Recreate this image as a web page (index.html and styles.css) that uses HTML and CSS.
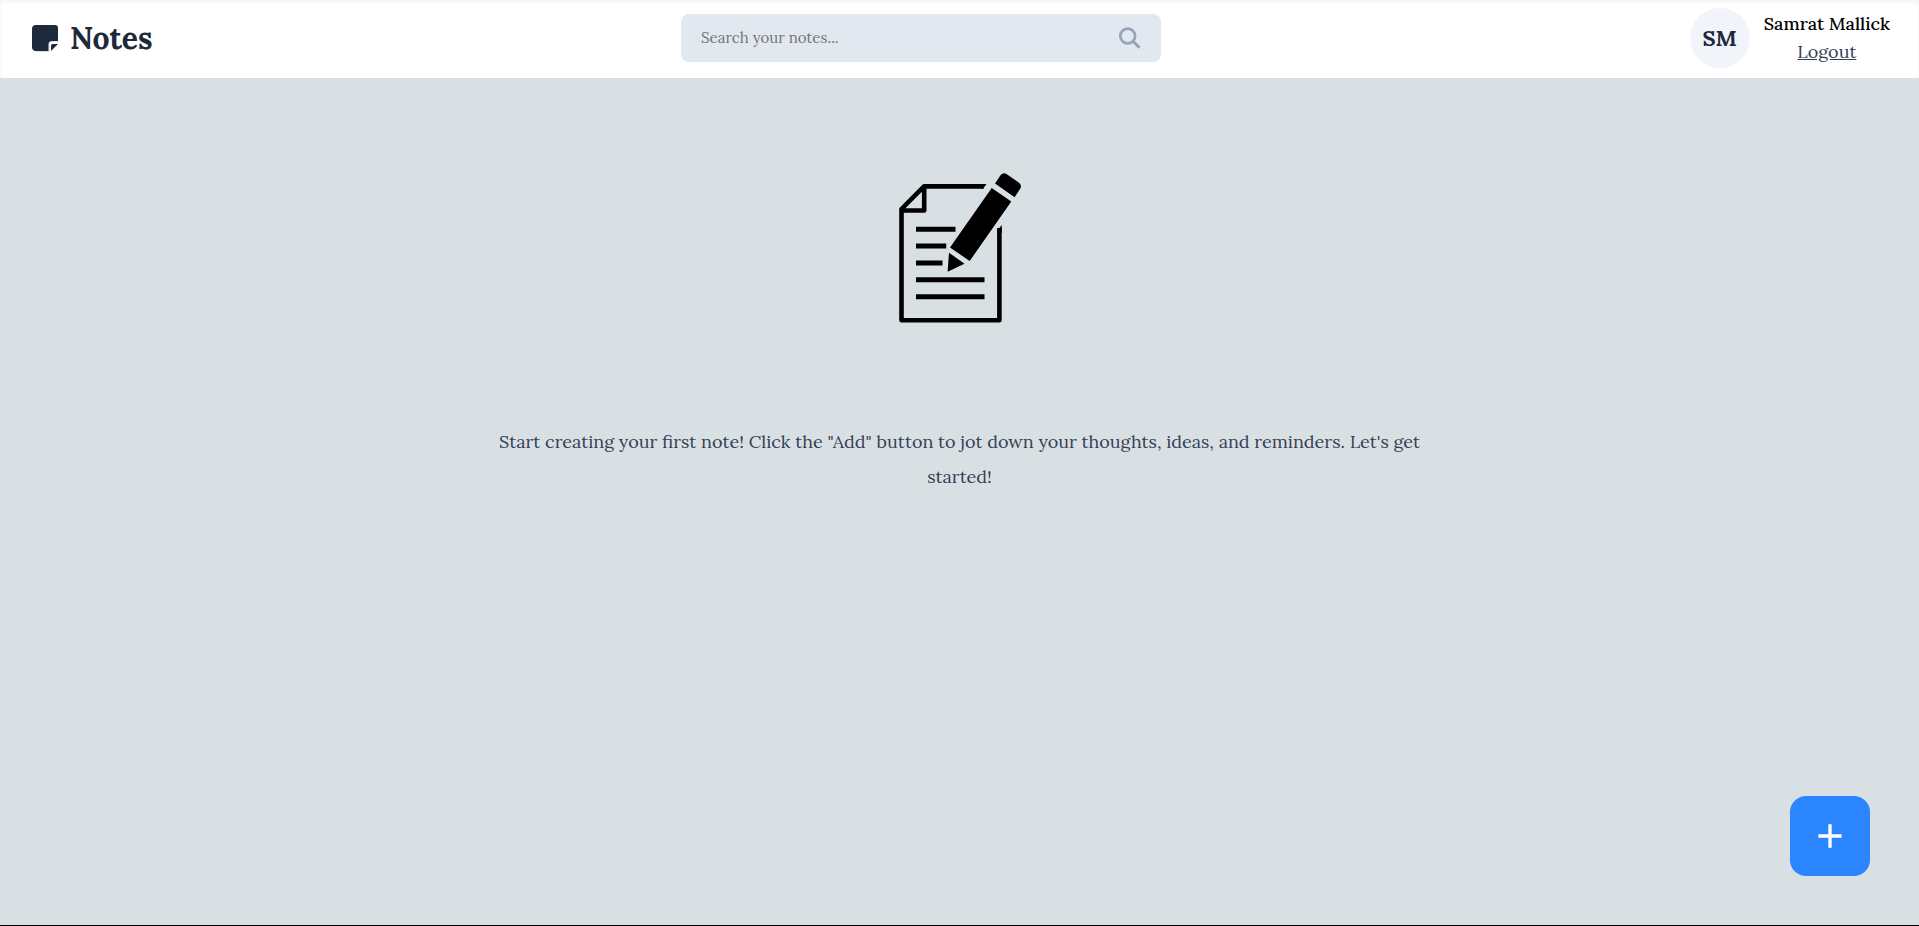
FILE: index.html
```html
<!DOCTYPE html>
<html lang="en">
<head>
<meta charset="utf-8">
<meta name="viewport" content="width=device-width, initial-scale=1">
<title>Notes</title>
<link rel="stylesheet" href="styles.css">
</head>
<body>
<header class="navbar">
  <div class="brand">
    <svg class="brand-icon" viewBox="0 0 27 27" aria-hidden="true">
      <path fill="#1e293b" d="M4 0H23Q26 0 26 3V16H20Q16.500 16 16.500 19.500V26H4Q0 26 0 22V4Q0 0 4 0Z"/>
      <path fill="#1e293b" d="M26 19L19 26V20.500Q19 19 20.500 19Z"/>
      <path fill="none" stroke="#1e293b" stroke-opacity=".15" d="M26.500 16.500H20Q17 16.500 17 19.500V26.500H4"/>
    </svg>
    <h1 class="brand-name">Notes</h1>
  </div>
  <form class="search" role="search">
    <input class="search-input" type="text" placeholder="Search your notes..." aria-label="Search your notes">
    <button class="search-button" type="button" aria-label="Search">
      <svg class="search-icon" viewBox="0 0 22 22" fill="none" stroke="#94a3b8" aria-hidden="true">
        <circle cx="8.700" cy="9" r="7.400" stroke-width="2.600"/>
        <path stroke-width="3" d="M14 14.300L20.500 20.800"/>
      </svg>
    </button>
  </form>
  <div class="profile">
    <div class="avatar">SM</div>
    <div class="account">
      <p class="account-name">Samrat Mallick</p>
      <button class="logout" type="button">Logout</button>
    </div>
  </div>
</header>
<main class="empty">
  <svg class="empty-icon" viewBox="-1 0 124 152" aria-hidden="true">
    <path fill="none" stroke="#000" stroke-width="4.600" stroke-linejoin="round" d="M84.500 13.400H25L2.500 36V147.300H100.400V55"/>
    <path fill="none" stroke="#000" stroke-width="4.600" stroke-linejoin="round" d="M25.200 13.400V37.500H2.500"/>
    <path fill="#000" d="M84 11H87.500L84 15.800H82ZM98 60V58L102.800 52V60Z"/>
    <path stroke="#000" stroke-width="5" d="M17 56.200H56.500M17 73H47.200M17 90H43.500M17 106.700H85.500M17 123.700H85.500"/>
    <path fill="#000" d="M92.700 15L112.300 28.500L70.700 88L51 74.500ZM96 10.500L101.500 2.200Q104 -1 107.500 1L120 9.700Q123 12 121.300 15.500L115.600 24.300ZM50 79.700L65.500 90.800L48.600 98.800Z"/>
  </svg>
  <p class="empty-text">Start creating your first note! Click the "Add" button to jot down your thoughts, ideas, and reminders. Let's get started!</p>
</main>
<button class="add" type="button" aria-label="Add note">
  <svg class="add-icon" viewBox="0 0 24 24" fill="#fff" aria-hidden="true"><path d="M19 13h-6v6h-2v-6H5v-2h6V5h2v6h6v2z"/></svg>
</button>
</body>
</html>
```
FILE: styles.css
```css
* {
  box-sizing: border-box;
}

body {
  margin: 0;
  min-height: 100vh;
  display: flex;
  flex-direction: column;
  background: #d9e0e3;
  border-bottom: 1px solid #000;
  font-family: Lora, "Liberation Serif", serif;
  color: #000;
}

button {
  padding: 0;
  border: 0;
  background: none;
  font: inherit;
  cursor: pointer;
}

.navbar {
  display: flex;
  align-items: center;
  justify-content: space-between;
  padding: 8px 29px 10px 32px;
  background: #fff;
  box-shadow: inset 0 2px 4px rgba(0, 0, 0, 0.05);
}

.brand {
  display: flex;
  align-items: center;
  gap: 11px;
}

.brand-icon {
  width: 27px;
  height: 27px;
}

.brand-name {
  margin: 0;
  font-size: 30px;
  line-height: 40px;
  font-weight: 700;
  color: #1e293b;
}

.search {
  display: flex;
  align-items: center;
  width: 480px;
  max-width: 50%;
  height: 48px;
  padding: 0 20px;
  border-radius: 8px;
  background: #e2e8f0;
}

.search-input {
  flex: 1;
  min-width: 0;
  padding: 0 0 2px;
  border: 0;
  outline: 0;
  background: transparent;
  font: inherit;
  font-size: 15px;
}

.search-input::placeholder {
  color: #757575;
}

.search-button {
  display: flex;
}

.search-icon {
  width: 22px;
  height: 22px;
}

.profile {
  display: flex;
  align-items: center;
  gap: 14px;
}

.avatar {
  display: grid;
  place-items: center;
  width: 60px;
  height: 60px;
  border-radius: 50%;
  background: #f1f5f9;
  font-size: 22px;
  font-weight: 700;
  color: #1e293b;
}

.account {
  display: flex;
  flex-direction: column;
  align-items: center;
}

.account-name {
  margin: 0;
  font-size: 18px;
  line-height: 28px;
  font-weight: 500;
}

.logout {
  font-size: 18px;
  line-height: 28px;
  color: #334155;
  text-decoration: underline;
}

.empty {
  display: flex;
  flex-direction: column;
  align-items: center;
  padding-top: 95px;
}

.empty-icon {
  width: 124px;
  height: 152px;
}

.empty-text {
  width: 50%;
  margin: 99px 0 0;
  font-size: 18px;
  line-height: 35px;
  text-align: center;
  color: #334155;
}

.add {
  position: fixed;
  right: 49px;
  bottom: 50px;
  display: grid;
  place-items: center;
  width: 80px;
  height: 80px;
  border-radius: 16px;
  background: #2b85ff;
}

.add-icon {
  width: 40px;
  height: 40px;
}
```
